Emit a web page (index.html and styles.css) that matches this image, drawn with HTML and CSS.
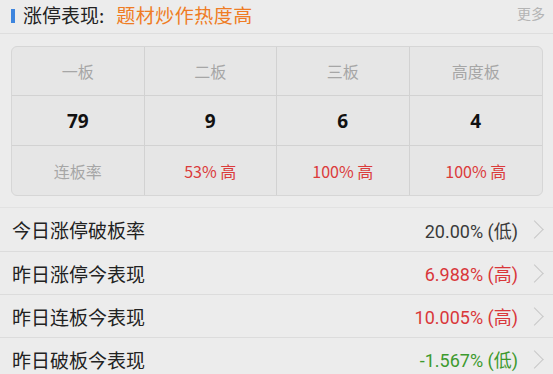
FILE: index.html
```html
<!DOCTYPE html>
<html lang="zh-CN">
<head>
    <meta charset="UTF-8">
    <meta name="viewport" content="width=device-width, initial-scale=1.0">
    <title>涨停表现</title>
    <link rel="stylesheet" href="styles.css">
</head>
<body>
    <div class="header">
        <span class="header-bar"></span>
        <span class="header-title">涨停表现:</span>
        <span class="header-tag">题材炒作热度高</span>
        <span class="header-more">更多</span>
    </div>

    <div class="board-wrap">
        <div class="board">
            <div class="cell label">一板</div>
            <div class="cell label">二板</div>
            <div class="cell label">三板</div>
            <div class="cell label">高度板</div>

            <div class="cell num">79</div>
            <div class="cell num">9</div>
            <div class="cell num">6</div>
            <div class="cell num">4</div>

            <div class="cell label">连板率</div>
            <div class="cell rate">53% 高</div>
            <div class="cell rate">100% 高</div>
            <div class="cell rate">100% 高</div>
        </div>
    </div>

    <div class="list">
        <div class="row">
            <span class="row-name">今日涨停破板率</span>
            <span class="row-value">20.00% (低)</span>
            <span class="chevron"></span>
        </div>
        <div class="row">
            <span class="row-name">昨日涨停今表现</span>
            <span class="row-value up">6.988% (高)</span>
            <span class="chevron"></span>
        </div>
        <div class="row">
            <span class="row-name">昨日连板今表现</span>
            <span class="row-value up">10.005% (高)</span>
            <span class="chevron"></span>
        </div>
        <div class="row">
            <span class="row-name">昨日破板今表现</span>
            <span class="row-value down">-1.567% (低)</span>
            <span class="chevron"></span>
        </div>
    </div>
</body>
</html>
```

FILE: styles.css
```css
* {
    margin: 0;
    padding: 0;
    box-sizing: border-box;
}

body {
    font-family: "Noto Sans CJK SC", "Noto Sans", sans-serif;
    background-color: #ececec;
    color: #222;
    width: 553px;
    overflow: hidden;
}

.header {
    height: 34px;
    display: flex;
    align-items: center;
    padding: 0 8px 0 11px;
    border-bottom: 1px solid #dedede;
}

.header-bar {
    width: 4px;
    height: 14px;
    background: #3d85de;
    margin-right: 8px;
    margin-top: -2px;
}

.header-title {
    font-size: 19px;
    line-height: 1;
    color: #222;
    margin-top: -4px;
}

.header-tag {
    font-size: 19px;
    line-height: 1;
    color: #ef7c24;
    margin-left: 12px;
    margin-top: -4px;
    letter-spacing: 0.5px;
}

.header-more {
    margin-left: auto;
    font-size: 14px;
    color: #b4b4b4;
    margin-top: -7px;
}

.board-wrap {
    padding: 12px 10px 11px 11px;
    border-bottom: 1px solid #e2e2e2;
}

.board {
    display: grid;
    grid-template-columns: repeat(4, 1fr);
    grid-template-rows: 49px 50px 49px;
    background: #e6e6e6;
    border: 1px solid #d6d6d6;
    border-radius: 6px;
    overflow: hidden;
}

.cell {
    display: flex;
    align-items: center;
    justify-content: center;
    border-right: 1px solid #d2d2d2;
    border-bottom: 1px solid #d2d2d2;
}

.cell:nth-child(4n) {
    border-right: none;
}

.cell:nth-child(n+9) {
    border-bottom: none;
}

.cell.label {
    font-size: 16px;
    color: #a6a6a6;
}

.cell.num {
    font-family: "Noto Sans", sans-serif;
    font-size: 19px;
    font-weight: bold;
    color: #111;
}

.cell.rate {
    font-size: 16px;
    color: #db3b3b;
}

.list {
    display: flex;
    flex-direction: column;
}

.row {
    height: 43px;
    display: flex;
    align-items: center;
    padding: 0 10px 0 12px;
    border-bottom: 1px solid #dcdcdc;
}

.row:first-child {
    height: 44px;
}

.row-name {
    font-size: 19px;
    color: #222;
}

.row-value {
    margin-left: auto;
    font-family: "Roboto", "Noto Sans CJK SC", sans-serif;
    font-size: 18px;
    color: #3a3a3a;
}

.row-value.up {
    color: #d9373a;
}

.row-value.down {
    color: #3d9a2e;
}

.chevron {
    width: 13px;
    height: 13px;
    border-top: 1px solid #c8c8c8;
    border-right: 1px solid #c8c8c8;
    transform: rotate(45deg);
    margin-left: 10px;
    margin-right: 2px;
}
```
